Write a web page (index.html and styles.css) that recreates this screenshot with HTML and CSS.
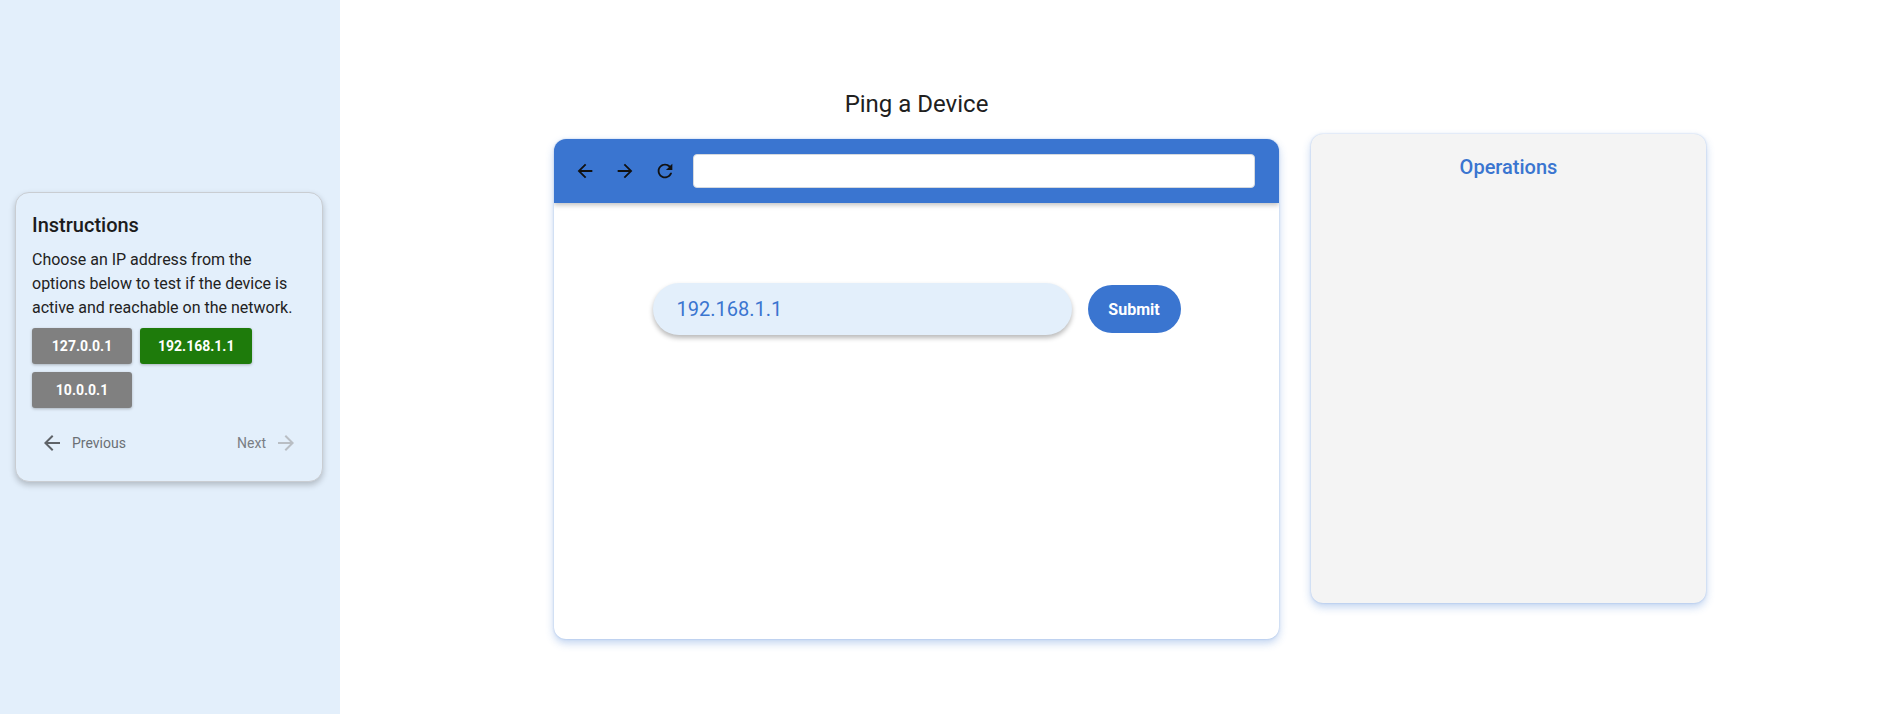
FILE: index.html
```html
<!DOCTYPE html>
<html lang="en">
<head>
<meta charset="utf-8">
<title>Ping a Device</title>
<link rel="stylesheet" href="styles.css">
</head>
<body>
<div class="app">
  <aside class="sidebar">
    <div class="card">
      <h2 class="card-title">Instructions</h2>
      <p class="card-text">Choose an IP address from the options below to test if the device is active and reachable on the network.</p>
      <div class="ip-list">
        <button class="ip-btn">127.0.0.1</button>
        <button class="ip-btn ip-active">192.168.1.1</button>
        <button class="ip-btn">10.0.0.1</button>
      </div>
      <div class="nav">
        <button class="nav-btn nav-prev">
          <svg class="nav-icon" viewBox="0 0 24 24"><path d="M20 11H7.83l5.59-5.59L12 4l-8 8 8 8 1.41-1.41L7.83 13H20v-2z"/></svg>
          <span>Previous</span>
        </button>
        <button class="nav-btn nav-next">
          <span>Next</span>
          <svg class="nav-icon" viewBox="0 0 24 24"><path d="M12 4l-1.41 1.41L16.17 11H4v2h12.17l-5.58 5.59L12 20l8-8z"/></svg>
        </button>
      </div>
    </div>
  </aside>
  <main class="main">
    <section class="stage">
      <h1 class="stage-title">Ping a Device</h1>
      <div class="browser">
        <div class="browser-bar">
          <svg class="bar-icon" viewBox="0 0 24 24"><path d="M20 11H7.83l5.59-5.59L12 4l-8 8 8 8 1.41-1.41L7.83 13H20v-2z"/></svg>
          <svg class="bar-icon" viewBox="0 0 24 24"><path d="M12 4l-1.41 1.41L16.17 11H4v2h12.17l-5.58 5.59L12 20l8-8z"/></svg>
          <svg class="bar-icon" viewBox="0 0 24 24"><path d="M17.65 6.35C16.2 4.9 14.21 4 12 4c-4.42 0-7.990 3.58-7.99 8s3.57 8 7.99 8c3.73 0 6.84-2.550 7.73-6h-2.08c-.82 2.33-3.04 4-5.65 4-3.31 0-6-2.69-6-6s2.69-6 6-6c1.66 0 3.14.69 4.22 1.78L13 11h7V4l-2.35 2.35z"/></svg>
          <div class="address"></div>
        </div>
        <div class="browser-body">
          <div class="ping-form">
            <div class="ip-field">192.168.1.1</div>
            <button class="submit">Submit</button>
          </div>
        </div>
      </div>
    </section>
    <section class="ops">
      <h2 class="ops-title">Operations</h2>
    </section>
  </main>
</div>
</body>
</html>
```

FILE: styles.css
```css
* { box-sizing: border-box; }

html, body {
  margin: 0;
  padding: 0;
  height: 714px;
  overflow: hidden;
  font-family: Roboto, "Liberation Sans", sans-serif;
  background: #ffffff;
}

.app {
  display: flex;
  height: 714px;
}

.sidebar {
  width: 340px;
  flex: 0 0 340px;
  background: #e3effb;
  padding: 192px 17px 0 15px;
}

.card {
  background: #e3effb;
  border: 1px solid #c9cdd2;
  border-radius: 14px;
  box-shadow: 0 3px 6px rgba(0, 0, 0, 0.22);
  padding: 20px 16px 18px 16px;
}

.card-title {
  margin: 0;
  font-size: 20px;
  font-weight: 500;
  line-height: 24px;
  color: #1c1c1c;
}

.card-text {
  margin: 11px 0 0 0;
  font-size: 16px;
  line-height: 24px;
  color: #222;
}

.ip-list {
  display: flex;
  flex-wrap: wrap;
  gap: 8px;
  margin-top: 8px;
}

.ip-btn {
  min-width: 100px;
  height: 36px;
  padding: 0 18px;
  border: none;
  border-radius: 3px;
  background: #808080;
  color: #fff;
  font-family: Roboto, "Liberation Sans", sans-serif;
  font-size: 14px;
  font-weight: 700;
  box-shadow: 0 1px 3px rgba(0, 0, 0, 0.25);
}

.ip-active {
  background: #1e7b0b;
}

.nav {
  display: flex;
  justify-content: space-between;
  margin-top: 15px;
}

.nav-btn {
  display: flex;
  align-items: center;
  gap: 8px;
  height: 40px;
  padding: 0 8px;
  border: none;
  background: transparent;
  font-family: Roboto, "Liberation Sans", sans-serif;
  font-size: 14px;
  color: #6b6f75;
}

.nav-icon {
  width: 24px;
  height: 24px;
}

.nav-prev .nav-icon { fill: #5f6368; }
.nav-next { color: #7a7e84; }
.nav-next .nav-icon { fill: #b9bec4; }

.main {
  flex: 1;
  display: flex;
  justify-content: center;
  align-items: flex-start;
  gap: 32px;
  padding: 90px 0 0 18px;
}

.stage {
  width: 725px;
  display: flex;
  flex-direction: column;
}

.stage-title {
  margin: 0 0 21px 0;
  font-size: 24px;
  font-weight: 400;
  line-height: 28px;
  text-align: center;
  color: #202020;
}

.browser {
  height: 500px;
  border-radius: 12px;
  background: #fff;
  box-shadow: 0 4px 8px rgba(58, 117, 208, 0.32), 0 0 2px rgba(58, 117, 208, 0.35);
  overflow: hidden;
  display: flex;
  flex-direction: column;
}

.browser-bar {
  height: 64px;
  flex: 0 0 64px;
  background: #3a75d0;
  display: flex;
  align-items: center;
  gap: 18px;
  padding: 0 24px 0 20px;
  box-shadow: 0 2px 5px rgba(0, 0, 0, 0.25);
  position: relative;
  z-index: 1;
}

.bar-icon {
  width: 22px;
  height: 22px;
  fill: #111;
  flex: 0 0 22px;
}

.address {
  flex: 1;
  height: 34px;
  margin-left: -1px;
  background: #fff;
  border-radius: 4px;
  border: 1px solid #d5d9de;
}

.browser-body {
  flex: 1;
  padding-top: 80px;
}

.ping-form {
  display: flex;
  justify-content: center;
  align-items: center;
  gap: 16px;
}

.ip-field {
  width: 419px;
  height: 52px;
  border-radius: 26px;
  background: #e3effb;
  box-shadow: 0 3px 5px rgba(0, 0, 0, 0.28);
  padding: 0 24px;
  display: flex;
  align-items: center;
  font-size: 20px;
  color: #3a75d0;
}

.submit {
  width: 93px;
  height: 48px;
  border: none;
  border-radius: 24px;
  background: #3a75d0;
  color: #fff;
  font-family: Roboto, "Liberation Sans", sans-serif;
  font-size: 16px;
  font-weight: 700;
}

.ops {
  width: 395px;
  height: 469px;
  margin-top: 44px;
  background: #f4f4f4;
  border-radius: 12px;
  box-shadow: 0 4px 8px rgba(58, 117, 208, 0.32), 0 0 2px rgba(58, 117, 208, 0.35);
  padding-top: 21px;
}

.ops-title {
  margin: 0;
  font-size: 20px;
  font-weight: 500;
  line-height: 24px;
  text-align: center;
  color: #3a75d0;
}
```
